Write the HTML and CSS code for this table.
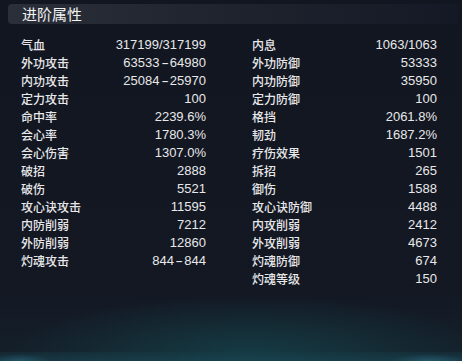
FILE: index.html
```html
<!DOCTYPE html>
<html lang="zh">
<head>
<meta charset="utf-8">
<link rel="stylesheet" href="styles.css">
</head>
<body>
<div class="panel">
  <div class="header"><span class="title">进阶属性</span></div>
  <div class="stats">
    <div class="col">
      <div class="row"><span class="k">气血</span><span class="v">317199/317199</span></div>
      <div class="row"><span class="k">外功攻击</span><span class="v">63533<span class="dash">-</span>64980</span></div>
      <div class="row"><span class="k">内功攻击</span><span class="v">25084<span class="dash">-</span>25970</span></div>
      <div class="row"><span class="k">定力攻击</span><span class="v">100</span></div>
      <div class="row"><span class="k">命中率</span><span class="v">2239.6%</span></div>
      <div class="row"><span class="k">会心率</span><span class="v">1780.3%</span></div>
      <div class="row"><span class="k">会心伤害</span><span class="v">1307.0%</span></div>
      <div class="row"><span class="k">破招</span><span class="v">2888</span></div>
      <div class="row"><span class="k">破伤</span><span class="v">5521</span></div>
      <div class="row"><span class="k">攻心诀攻击</span><span class="v">11595</span></div>
      <div class="row"><span class="k">内防削弱</span><span class="v">7212</span></div>
      <div class="row"><span class="k">外防削弱</span><span class="v">12860</span></div>
      <div class="row"><span class="k">灼魂攻击</span><span class="v">844<span class="dash">-</span>844</span></div>
    </div>
    <div class="col">
      <div class="row"><span class="k">内息</span><span class="v">1063/1063</span></div>
      <div class="row"><span class="k">外功防御</span><span class="v">53333</span></div>
      <div class="row"><span class="k">内功防御</span><span class="v">35950</span></div>
      <div class="row"><span class="k">定力防御</span><span class="v">100</span></div>
      <div class="row"><span class="k">格挡</span><span class="v">2061.8%</span></div>
      <div class="row"><span class="k">韧劲</span><span class="v">1687.2%</span></div>
      <div class="row"><span class="k">疗伤效果</span><span class="v">1501</span></div>
      <div class="row"><span class="k">拆招</span><span class="v">265</span></div>
      <div class="row"><span class="k">御伤</span><span class="v">1588</span></div>
      <div class="row"><span class="k">攻心诀防御</span><span class="v">4488</span></div>
      <div class="row"><span class="k">内攻削弱</span><span class="v">2412</span></div>
      <div class="row"><span class="k">外攻削弱</span><span class="v">4673</span></div>
      <div class="row"><span class="k">灼魂防御</span><span class="v">674</span></div>
      <div class="row"><span class="k">灼魂等级</span><span class="v">150</span></div>
    </div>
  </div>
  <div class="footer"></div>
</div>
</body>
</html>
```
FILE: styles.css
```css
html, body {
  margin: 0;
  padding: 0;
}
body {
  width: 462px;
  height: 361px;
  overflow: hidden;
  background: #121620;
}
.panel {
  width: 462px;
  height: 361px;
  background:
    radial-gradient(ellipse 240px 60px at 250px 355px, rgba(22, 78, 86, 0.6), rgba(22, 78, 86, 0) 100%),
    linear-gradient(to bottom, #121620 0px, #131823 290px, #14202a 361px);
  display: flex;
  flex-direction: column;
  font-family: "Noto Sans CJK SC", sans-serif;
  color: #e8e8ea;
}
.header {
  margin: 4px 4px 0 8px;
  height: 20px;
  border-radius: 4px;
  background: linear-gradient(to right, #2b2f3a 0%, #20242f 45%, #141925 100%);
  display: flex;
  align-items: center;
  padding-left: 14px;
}
.title {
  font-size: 15px;
  line-height: 20px;
  color: #f2f2f2;
}
.stats {
  display: grid;
  grid-template-columns: 231px 231px;
  margin-top: 12px;
}
.col {
  display: flex;
  flex-direction: column;
  padding: 0 25px 0 21px;
}
.row {
  height: 18px;
  display: flex;
  justify-content: space-between;
  align-items: center;
}
.k {
  font-size: 12px;
  line-height: 18px;
  font-weight: 500;
}
.v {
  font-family: "Liberation Sans", Arial, sans-serif;
  font-size: 13px;
  line-height: 18px;
}
.dash {
  display: inline-block;
  padding: 0 3px;
  transform: scaleX(1.8);
}
.footer {
  margin-top: auto;
  height: 9px;
  background:
    radial-gradient(ellipse 30px 7px at 20px 9px, rgba(50, 120, 150, 0.45), rgba(50,120,150,0) 100%),
    radial-gradient(ellipse 40px 7px at 430px 9px, rgba(50, 120, 150, 0.45), rgba(50,120,150,0) 100%),
    linear-gradient(to bottom, rgba(22, 60, 72, 0.3), rgba(26, 72, 86, 0.55));
}
```
